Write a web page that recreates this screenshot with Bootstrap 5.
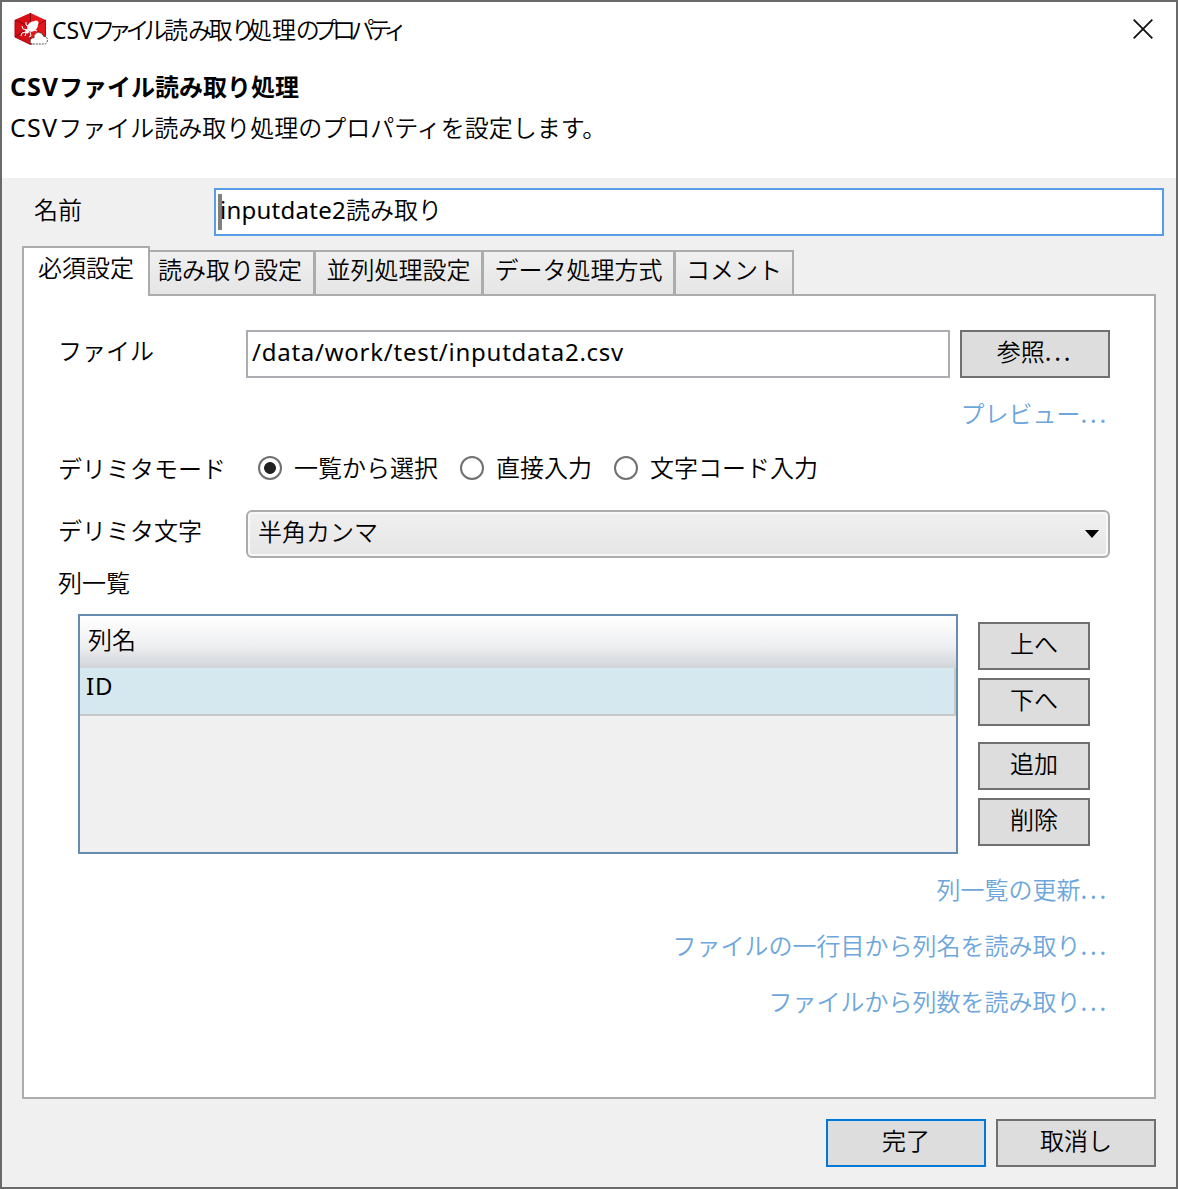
<!DOCTYPE html>
<html lang="ja">
<head>
<meta charset="utf-8">
<title>CSVファイル読み取り処理のプロパティ</title>
<link href="https://cdn.jsdelivr.net/npm/bootstrap@5.3.0/dist/css/bootstrap.min.css" rel="stylesheet">
<style>
body{margin:0;font-family:"Noto Sans","Noto Sans CJK JP",sans-serif;font-size:24px;line-height:32px;color:#000;font-weight:350;white-space:nowrap}
.dialog{width:1178px;height:1189px;border:2px solid #6b6a6a;background:#f0f0f0}
.dlg-head{height:176px;background:#fff;padding:0 8px}
.title-bar{height:54px;padding:0 0 0 4px}
.title-text{padding:1px 0 0 4px;font-feature-settings:"palt"}
.title-text .en{font-size:23px}
.kn{letter-spacing:-3px}
.kn-tight{letter-spacing:-4.5px}
.lat{font-size:25px;line-height:24px;letter-spacing:1.2px}
.heading .lat{letter-spacing:1px}
.dots{font-size:25px;line-height:24px;letter-spacing:2.8px;font-weight:400}
.close-x{margin-right:15px}
.heading{font-size:24px;line-height:32px;font-weight:700;margin:15px 0 0}
.sub{margin:9px 0 0}
.name-row{height:68px;padding:10px 12px 0 32px}
.name-label{width:180px;line-height:43px}
.field{border:2px solid #abadb3;border-radius:0;background:#fff;height:48px;padding:0 4px;font-size:24px;line-height:39px;color:#000}
.name-field{border-color:#569de5;padding-left:2px;display:flex}
.name-field .en{letter-spacing:.25px;margin-left:-1px}
.en{font-weight:400}
.path-text{letter-spacing:.75px}
.caret{width:4px;height:36px;margin:4px -1px 0 0;background:#808080}
.tabs{padding-left:20px;height:50px;margin-bottom:-2px;position:relative;z-index:1}
.tabs .nav-link{border:2px solid #acacac;border-radius:0;padding:0;text-align:center;color:#000;height:46px;line-height:36px;background:linear-gradient(#f0f0f0,#e5e5e5);margin:0 0 0 -1px}
.tabs .nav-link.active{height:50px;line-height:40px;background:#fff;border-color:#acacac;border-bottom:0;width:128px;margin:0}
.tabs .nav-link:nth-child(2){margin-left:-2px;padding-right:3px}
.panel{margin:0 20px;height:805px;border:2px solid #acacac;background:#fff;padding:34px 44px 0 34px}
.lbl{width:188px;line-height:42px}
.wbtn{border:2px solid #707070;border-radius:0;background:#ddd;color:#000;height:48px;padding:0 0 5px;font-size:24px;line-height:38px;font-weight:350}
.wbtn.primary{border-color:#0078d7}
.wlink{color:#6da6da;line-height:55px;height:56px;padding-right:1px}
.radio{width:24px;height:24px;border:2px solid #707070;border-radius:50%;margin-right:12px}
.radio.on{background:radial-gradient(circle,#222 5.5px,#fff 6.3px)}
.radio-label{margin-right:22px;line-height:44px}
.combo{height:48px;border:2px solid #acacac;border-radius:6px;background:linear-gradient(#f0f0f0,#e5e5e5);box-shadow:inset 0 0 0 2px #f8f8f8;padding:0 9px 0 10px;line-height:38px}
.combo-text{padding-bottom:5px}
.grid{width:880px;height:240px;border:2px solid #688caf;background:#f0f0f0;margin-left:20px}
.grid-head{height:52px;padding-left:8px;line-height:47px;background:linear-gradient(#fff,#eff0f1 55%,#d0d4d9)}
.grid-row{height:48px;border:solid #c8c8c8;border-width:0 2px 2px 0;background:#d5e8ef;padding-left:6px;line-height:36px;letter-spacing:.8px}
.side{padding-top:8px;width:112px;margin-left:20px}
.footer-bar{padding:20px 20px 0;gap:10px}
.footer-bar .wbtn{width:160px}
</style>
</head>
<body>
<main class="dialog">
<header class="dlg-head">
  <div class="title-bar d-flex align-items-center">
    <svg width="34" height="34" viewBox="0 0 34 34">
      <path d="M16.500 1 31.500 8v17L16.500 32.500 1 25V8z" fill="#e5171b"/>
      <path d="M16.500 1v31.500L1 25V8z" fill="#d40f16"/>
      <path d="M16.500 1v9M1 8l11 5M31.500 8l-8 5M1 25l9-6M16.500 32v-8M31 25l-7-6" stroke="#8d060b" fill="none"/>
      <path d="M31.500 8v17L16.500 32.500 1 25V8" stroke="#a80b11" fill="none"/>
      <ellipse cx="18.500" cy="14.500" rx="6" ry="4.600" transform="rotate(-42 18.500 14.500)" fill="#fff"/>
      <circle cx="13" cy="19.500" r="2" fill="#fff"/><circle cx="22" cy="11" r="2.500" fill="#fff"/>
      <path d="m14 18-5-1-1-3M15 15l-3-2v-3M12 20l-4 1-1 3M16 20l1 4-2 1M20 18l3 1M12 21l-1 3" stroke="#fff" stroke-width="1" fill="none"/>
      <path d="M18.500 32c-4-1-2.500-6.500 1.500-6 0-7 8-7 9.500-1.500 5-1 5 6.500 1.500 7.500z" fill="#fff" stroke="#444" stroke-width=".9" stroke-dasharray="2 1"/>
    </svg>
    <div class="title-text flex-grow-1"><span class="en">CSV</span><span class="kn">ファイル</span>読<span class="kn">み</span>取<span class="kn-tight">り</span>処理<span class="kn-tight">のプロパティ</span></div>
    <svg class="close-x" width="20" height="20" viewBox="0 0 20 20"><path d="m.7.7 18.6 18.6M19.300.7.7 19.300" stroke="#111" stroke-width="1.800"/></svg>
  </div>
  <h1 class="heading"><span class="lat">CSV</span>ファイル読み取り処理</h1>
  <p class="sub"><span class="lat en">CSV</span>ファイル読み取り処理のプロパティを設定します。</p>
</header>
<div class="name-row d-flex">
  <div class="name-label">名前</div>
  <div class="field name-field flex-grow-1"><span class="caret"></span><span class="en">inputdate2</span><span>読み取り</span></div>
</div>
<nav class="nav nav-tabs tabs border-0 align-items-end flex-nowrap">
  <a class="nav-link active">必須設定</a>
  <a class="nav-link" style="width:167px">読み取り設定</a>
  <a class="nav-link" style="width:169px">並列処理設定</a>
  <a class="nav-link" style="width:193px">データ処理方式</a>
  <a class="nav-link" style="width:120px">コメント</a>
</nav>
<section class="panel">
  <div class="d-flex">
    <div class="lbl">ファイル</div>
    <div class="field path-text en flex-grow-1">/data/work/test/inputdata2.csv</div>
    <button class="btn wbtn" style="width:150px;margin-left:10px">参照<span class="dots">...</span></button>
  </div>
  <div class="wlink text-end" style="margin-top:8px">プレビュー<span class="dots">...</span></div>
  <div class="d-flex align-items-center" style="margin-top:4px;height:44px">
    <div class="lbl" style="width:200px;padding-top:1px">デリミタモード</div>
    <span class="radio on"></span><span class="radio-label">一覧から選択</span>
    <span class="radio"></span><span class="radio-label">直接入力</span>
    <span class="radio"></span><span class="radio-label">文字コード入力</span>
  </div>
  <div class="d-flex" style="margin-top:20px">
    <div class="lbl">デリミタ文字</div>
    <div class="combo flex-grow-1 d-flex align-items-center justify-content-between"><span class="combo-text">半角カンマ</span>
      <svg width="14" height="8" viewBox="0 0 14 8"><path d="M0 0h14L7 8z"/></svg></div>
  </div>
  <div style="height:56px;line-height:50px">列一覧</div>
  <div class="d-flex">
    <div class="grid"><div class="grid-head">列名</div><div class="grid-row en">ID</div></div>
    <div class="side d-flex flex-column gap-2">
      <button class="btn wbtn">上へ</button>
      <button class="btn wbtn">下へ</button>
      <button class="btn wbtn mt-2">追加</button>
      <button class="btn wbtn">削除</button>
    </div>
  </div>
  <div class="text-end" style="margin-top:8px">
    <div class="wlink">列一覧の更新<span class="dots">...</span></div>
    <div class="wlink">ファイルの一行目から列名を読み取り<span class="dots">...</span></div>
    <div class="wlink">ファイルから列数を読み取り<span class="dots">...</span></div>
  </div>
</section>
<footer class="footer-bar d-flex justify-content-end">
  <button class="btn wbtn primary">完了</button>
  <button class="btn wbtn">取消し</button>
</footer>
</main>
<script src="https://cdn.jsdelivr.net/npm/bootstrap@5.3.0/dist/js/bootstrap.bundle.min.js"></script>
</body>
</html>
